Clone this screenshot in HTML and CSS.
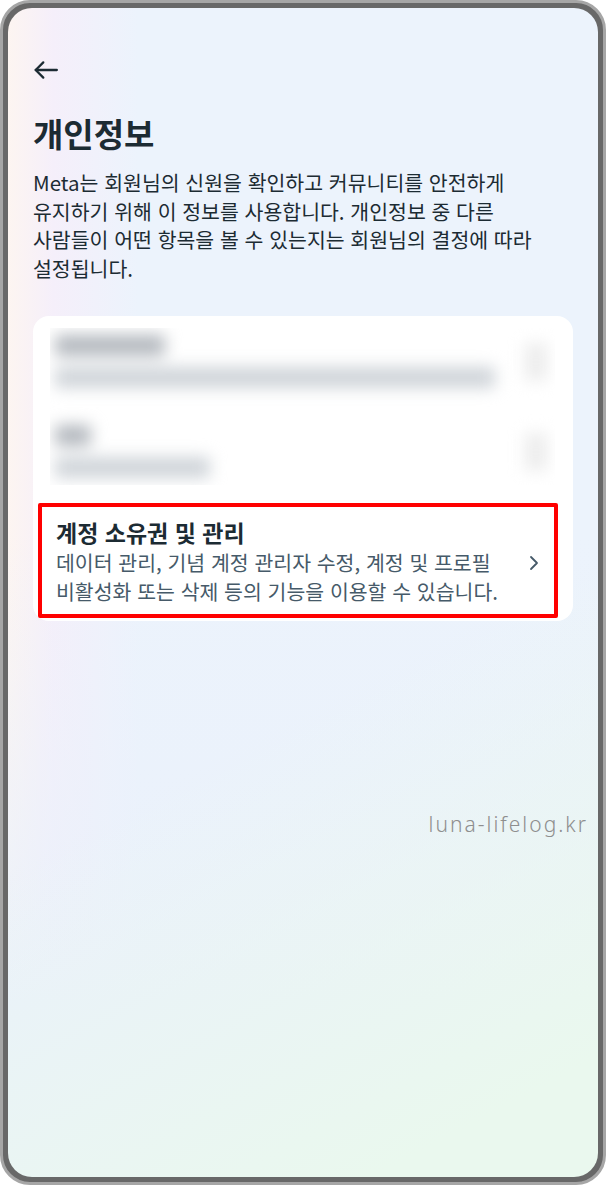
FILE: index.html
```html
<!DOCTYPE html>
<html lang="ko">

<head>
    <meta charset="UTF-8">
    <meta name="viewport" content="width=device-width, initial-scale=1.0">
    <title>개인정보</title>
    <link rel="stylesheet" href="styles.css">
</head>

<body>
    <div class="phone">
        <div class="screen">
            <div class="top-bar">
                <svg class="back" width="26" height="26" viewBox="0 0 24 24" fill="none" stroke="#1c2b33" stroke-width="2.1" stroke-linecap="round" stroke-linejoin="round">
                    <path d="M22 12H2.5"></path>
                    <path d="M9.5 5L2.5 12L9.5 19"></path>
                </svg>
            </div>

            <h1 class="title">개인정보</h1>
            <p class="intro">Meta는 회원님의 신원을 확인하고 커뮤니티를 안전하게 유지하기 위해 이 정보를 사용합니다. 개인정보 중 다른 사람들이 어떤 항목을 볼 수 있는지는 회원님의 결정에 따라 설정됩니다.</p>

            <div class="card">
                <div class="blur-box">
                    <div class="blur-inner">
                        <div class="blur-row">
                            <div class="blur-text">
                                <div class="bar bar-title" style="width: 110px"></div>
                                <div class="bar bar-sub" style="width: 440px"></div>
                            </div>
                            <div class="bar bar-icon"></div>
                        </div>
                        <div class="blur-row">
                            <div class="blur-text">
                                <div class="bar bar-title" style="width: 36px"></div>
                                <div class="bar bar-sub" style="width: 155px"></div>
                            </div>
                            <div class="bar bar-icon"></div>
                        </div>
                    </div>
                </div>

                <div class="owner-row">
                    <div class="owner-text">
                        <div class="owner-title">계정 소유권 및 관리</div>
                        <div class="owner-desc">데이터 관리, 기념 계정 관리자 수정, 계정 및 프로필 비활성화 또는 삭제 등의 기능을 이용할 수 있습니다.</div>
                    </div>
                    <svg class="chevron" width="12" height="16" viewBox="0 0 12 16" fill="none" stroke="#465a69" stroke-width="1.8" stroke-linecap="round" stroke-linejoin="round">
                        <path d="M3 2L9 8L3 14"></path>
                    </svg>
                </div>
            </div>

            <div class="watermark">luna-lifelog.kr</div>
        </div>
    </div>
</body>

</html>
```

FILE: styles.css
```css
html,
body {
    margin: 0;
    padding: 0;
    background: #ffffff;
}

.phone {
    width: 606px;
    height: 1185px;
    box-sizing: border-box;
    border: 3px solid #a6a6a6;
    border-radius: 30px;
    background-color: #686868;
    padding: 5px;
}

.screen {
    position: relative;
    height: 100%;
    box-sizing: border-box;
    border-radius: 24px;
    overflow: hidden;
    padding: 0 25px;
    font-family: "Noto Sans CJK KR", "Noto Sans", sans-serif;
    color: #1c2b33;
    word-break: keep-all;
    background:
        linear-gradient(152deg, rgba(234, 248, 238, 0) 58%, rgba(234, 248, 238, 1) 92%),
        linear-gradient(to bottom, rgba(234, 241, 251, 0) 45%, rgba(234, 241, 251, 1) 85%),
        linear-gradient(to right, #fdf5f1 0, #f5effa 45px, rgba(237, 244, 253, 0) 130px),
        #ecf3fc;
}

.top-bar {
    padding-top: 49px;
    height: 40px;
}

.back {
    display: block;
    margin-left: 0;
}

.title {
    margin: 13px 0 0;
    font-size: 33px;
    font-weight: 700;
    line-height: 46px;
}

.intro {
    margin: 12px 0 0;
    font-size: 20.5px;
    line-height: 28.5px;
    color: #1c2b33;
}

.card {
    margin-top: 34px;
    background: #ffffff;
    border-radius: 16px;
    padding: 12px 15px 3px 5px;
}

.blur-box {
    margin-left: 12px;
    width: 505px;
    height: 157px;
    overflow: hidden;
}

.blur-inner {
    filter: blur(8px);
    padding: 7px 0 0 5px;
}

.blur-row {
    display: flex;
    align-items: flex-start;
    justify-content: space-between;
    height: 90px;
}

.blur-text {
    display: flex;
    flex-direction: column;
    gap: 11px;
}

.bar {
    height: 21px;
    border-radius: 4px;
}

.bar-title {
    background: #b3b8be;
}

.bar-sub {
    background: #cfd4d9;
}

.bar-icon {
    width: 22px;
    height: 38px;
    margin: 8px 8px 0 0;
    background: #ececec;
}

.owner-row {
    margin-top: 18px;
    border: 4px solid #ff0000;
    border-radius: 2px;
    display: flex;
    align-items: center;
    padding: 10px 14px 8px 14px;
}

.owner-text {
    flex: 1;
}

.owner-title {
    font-size: 23px;
    font-weight: 700;
    line-height: 31px;
    color: #1c2b33;
}

.owner-desc {
    font-size: 20.5px;
    line-height: 29px;
    color: #465a69;
}

.chevron {
    display: block;
    margin-top: 2px;
}

.watermark {
    position: absolute;
    right: 10px;
    top: 802px;
    font-family: "Noto Sans", sans-serif;
    font-weight: 300;
    font-size: 21px;
    letter-spacing: 2px;
    color: #8e8e8e;
}
```
